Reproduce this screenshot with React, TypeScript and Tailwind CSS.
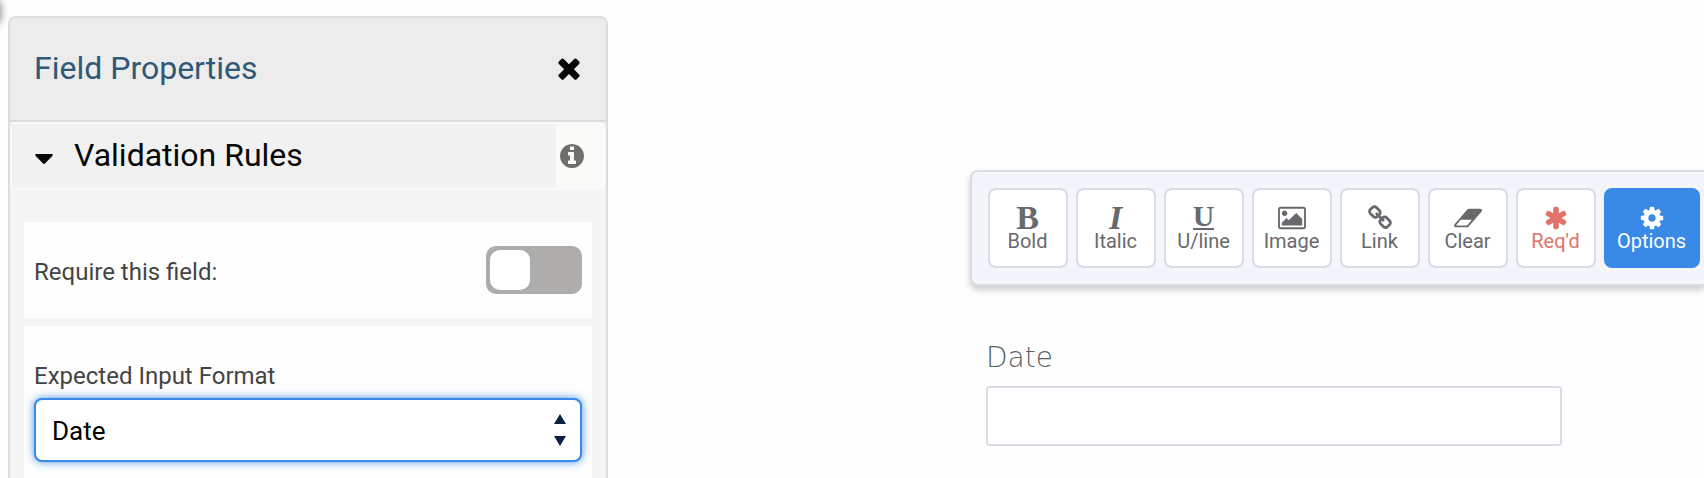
import type { ReactNode } from "react";

const paths = {
  times:
    "M1490 1322q0 40-28 68l-136 136q-28 28-68 28t-68-28l-294-294-294 294q-28 28-68 28t-68-28l-136-136q-28-28-28-68t28-68l294-294-294-294q-28-28-28-68t28-68l136-136q28-28 68-28t68 28l294 294 294-294q28-28 68-28t68 28l136 136q28 28 28 68t-28 68l-294 294 294 294q28 28 28 68z",
  info: "M1152 1376v-160q0-14-9-23t-23-9h-96v-512q0-14-9-23t-23-9h-320q-14 0-23 9t-9 23v160q0 14 9 23t23 9h96v320h-96q-14 0-23 9t-9 23v160q0 14 9 23t23 9h448q14 0 23-9t9-23zm-128-896v-160q0-14-9-23t-23-9h-192q-14 0-23 9t-9 23v160q0 14 9 23t23 9h192q14 0 23-9t9-23zm640 416q0 209-103 385.5t-279.5 279.5-385.5 103-385.5-103-279.5-279.5-103-385.5 103-385.5 279.5-279.5 385.5-103 385.5 103 279.5 279.5 103 385.5z",
  asterisk:
    "M1546 1050q46 26 59.5 77.5t-12.5 97.5l-64 110q-26 46-77.5 59.5t-97.5-12.5l-266-153v307q0 52-38 90t-90 38h-128q-52 0-90-38t-38-90v-307l-266 153q-46 26-97.5 12.5t-77.5-59.5l-64-110q-26-46-12.5-97.5t59.5-77.5l266-154-266-154q-46-26-59.5-77.5t12.5-97.5l64-110q26-46 77.5-59.5t97.5 12.5l266 153v-307q0-52 38-90t90-38h128q52 0 90 38t38 90v307l266-153q46-26 97.5-12.5t77.5 59.5l64 110q26 46 12.5 97.5t-59.5 77.5l-266 154z",
  eraser:
    "M960 1408l336-384h-768l-336 384h768zm1013-1077q15 34 9.5 71.5t-30.5 65.5l-896 1024q-38 44-96 44h-768q-38 0-69.5-20.5t-47.5-54.5q-15-34-9.5-71.5t30.5-65.5l896-1024q38-44 96-44h768q38 0 69.5 20.5t47.5 54.5z",
  image:
    "M640 576q0 80-56 136t-136 56-136-56-56-136 56-136 136-56 136 56 56 136zm1024 384v448h-1408v-192l320-320 160 160 512-512zm96-704h-1600q-13 0-22.5 9.5t-9.5 22.5v1216q0 13 9.5 22.5t22.5 9.5h1600q13 0 22.5-9.5t9.5-22.5v-1216q0-13-9.5-22.5t-22.5-9.5zm160 32v1216q0 66-47 113t-113 47h-1600q-66 0-113-47t-47-113v-1216q0-66 47-113t113-47h1600q66 0 113 47t47 113z",
  cog: "M1152 896q0-106-75-181t-181-75-181 75-75 181 75 181 181 75 181-75 75-181zm512-109v222q0 12-8 23t-20 13l-185 28q-19 54-39 91 35 50 107 138 10 12 10 25t-9 23q-27 37-99 108t-94 71q-12 0-26-9l-138-108q-44 23-91 38-16 136-29 186-7 28-36 28h-222q-14 0-24.5-8.5t-11.5-21.5l-28-184q-49-16-90-37l-141 107q-10 9-25 9-14 0-25-11-126-114-165-168-7-10-7-23 0-12 8-23 15-21 51-66.5t54-70.5q-27-50-41-99l-183-27q-13-2-21-12.5t-8-23.5v-222q0-12 8-23t19-13l186-28q14-46 39-92-40-57-107-138-10-12-10-24 0-10 9-23 26-36 98.5-107.5t94.5-71.5q13 0 26 10l138 107q44-23 91-38 16-136 29-186 7-28 36-28h222q14 0 24.5 8.5t11.5 21.5l28 184q49 16 90 37l142-107q9-9 24-9 13 0 25 10 129 119 165 170 7 8 7 22 0 12-8 23-15 21-51 66.5t-54 70.5q26 50 41 98l183 28q13 2 21 12.5t8 23.5z",
  link: "M1520 1216q0-40-28-68l-208-208q-28-28-68-28-42 0-72 32 3 3 19 18.5t21.5 21.5 15 19 13 25.5 3.5 27.5q0 40-28 68t-68 28q-15 0-27.5-3.5t-25.5-13-19-15-21.5-21.5-18.5-19q-33 31-33 73 0 40 28 68l206 207q27 27 68 27 40 0 68-26l147-146q28-28 28-67zm-703-705q0-40-28-68l-206-207q-28-28-68-28-39 0-68 27l-147 146q-28 28-28 67 0 40 28 68l208 208q27 27 68 27 42 0 72-31-3-3-19-18.5t-21.5-21.5-15-19-13-25.5-3.5-27.5q0-40 28-68t68-28q15 0 27.5 3.5t25.5 13 19 15 21.5 21.5 18.5 19q33-31 33-73zm895 705q0 120-85 203l-147 146q-83 83-203 83-121 0-204-85l-206-207q-83-83-83-203 0-123 88-209l-88-88q-86 88-208 88-120 0-204-84l-208-208q-84-84-84-204t85-203l147-146q83-83 203-83 121 0 204 85l206 207q83 83 83 203 0 123-88 209l88 88q86-88 208-88 120 0 204 84l208 208q84 84 84 204z",
};

function Icon({ name, width = 1792, className }: { name: keyof typeof paths; width?: number; className: string }) {
  return (
    <svg viewBox={`0 0 ${width} 1792`} className={className} fill="currentColor" aria-hidden="true">
      <path d={paths[name]} />
    </svg>
  );
}

function ToolButton({ label, tone = "plain", children }: { label: string; tone?: "plain" | "danger" | "active"; children: ReactNode }) {
  const tones = {
    plain: "w-20 border-[#d9dde6] bg-white text-[#68696d]",
    danger: "w-20 border-[#d9dde6] bg-white text-[#e2736b]",
    active: "w-24 border-[#3989e6] bg-[#3989e6] text-white",
  };
  return (
    <button type="button" className={`flex h-20 shrink-0 flex-col items-center rounded-lg border-2 pt-[15px] pr-px ${tones[tone]}`}>
      <span className="flex h-[26px] items-center justify-center font-['Liberation_Serif',serif] text-[34px] leading-[26px]">{children}</span>
      <span className="text-xl leading-5">{label}</span>
    </button>
  );
}

export default function App() {
  return (
    <div className="relative flex min-h-screen overflow-hidden bg-[#fefefe] pt-4 pl-2 font-[Roboto,sans-serif]">
      <div className="absolute top-0 -left-4 h-6 w-4 rounded-lg shadow-[0_0_8px_rgba(0,0,0,0.6)]" />

      <aside className="w-[600px] shrink-0 rounded-t-lg border-2 border-b-0 border-[#dcdcdc] bg-[#f4f4f4]">
        <header className="flex h-26 items-center justify-between rounded-t-md border-b-2 border-[#dcdcdc] bg-[#ececec] pr-[21px] pb-0.5 pl-6">
          <h2 className="text-[32px] leading-10 text-[#2f5977]">Field Properties</h2>
          <button type="button" aria-label="Close" className="text-[#070707]">
            <Icon name="times" className="size-8" />
          </button>
        </header>

        <div className="flex h-17 rounded-lg border-2 border-r-0 border-[#fafaf9] bg-[#fafaf8]">
          <button type="button" aria-expanded="true" className="flex flex-1 items-center gap-[21px] bg-[#f1f1f1] pb-0.5 pl-[23px] text-[#070707]">
            <svg viewBox="0 0 18 10" className="mt-2 h-[10px] w-[18px]" fill="currentColor" aria-hidden="true">
              <path d="M1 0h16q1.400 .4.500 1.700L10.200 9.300Q9 10.500 7.800 9.300L.5 1.700Q-.4.400 1 0z" />
            </svg>
            <span className="text-[32px] leading-10">Validation Rules</span>
          </button>
          <button type="button" aria-label="Help" className="flex w-[50px] items-center pl-0.5 text-[#706f6c]">
            <Icon name="info" className="size-7" />
          </button>
        </div>

        <div className="flex flex-col gap-2 px-3.5 pt-8">
          <div className="flex h-24 items-center justify-between bg-[#fefefe] px-2.5">
            <label htmlFor="required" className="pt-1 text-2xl text-[#444444]">
              Require this field:
            </label>
            <input
              id="required"
              type="checkbox"
              role="switch"
              className="h-12 w-24 appearance-none rounded-[10px] bg-[#aeadab] p-1 before:block before:size-10 before:rounded-[10px] before:bg-white checked:before:ml-12"
            />
          </div>
          <div className="bg-[#fefefe] px-2.5 pt-[34px] pb-4">
            <label htmlFor="format" className="block pb-1.5 text-2xl text-[#444444]">
              Expected Input Format
            </label>
            <div className="relative">
              <select
                id="format"
                className="block h-16 w-full appearance-none rounded-lg border-2 border-[#3989e6] bg-white px-4 pt-0.5 text-[26px] text-black shadow-[0_0_8px_rgba(57,137,230,0.9)] outline-none"
              >
                <option>Date</option>
              </select>
              <svg viewBox="0 0 12 32" className="pointer-events-none absolute top-4 right-4 h-8 w-3" fill="#0b1f40" aria-hidden="true">
                <path d="M6 0l6 10H0zM6 32l6-10H0z" />
              </svg>
            </div>
          </div>
        </div>
      </aside>

      <main className="min-w-0 flex-1 pt-[154px] pl-[362px]">
        <div
          role="toolbar"
          aria-label="Formatting"
          className="flex gap-2 rounded-l-lg border-2 border-r-0 border-[#d9dde6] bg-[#f4f5fa] py-4 pl-4 shadow-[0_4px_6px_rgba(0,0,0,0.2)]"
        >
          <ToolButton label="Bold">
            <b>B</b>
          </ToolButton>
          <ToolButton label="Italic">
            <b className="italic">I</b>
          </ToolButton>
          <ToolButton label="U/line">
            <span className="block h-6 border-b-2 border-current text-[30px] leading-5 font-bold">U</span>
          </ToolButton>
          <ToolButton label="Image">
            <Icon name="image" width={1920} className="h-[26px] w-7" />
          </ToolButton>
          <ToolButton label="Link">
            <Icon name="link" className="size-[26px]" />
          </ToolButton>
          <ToolButton label="Clear">
            <Icon name="eraser" width={2048} className="h-[26px] w-[30px]" />
          </ToolButton>
          <ToolButton label="Req'd" tone="danger">
            <Icon name="asterisk" className="size-[26px]" />
          </ToolButton>
          <ToolButton label="Options" tone="active">
            <Icon name="cog" className="size-[26px]" />
          </ToolButton>
        </div>

        <div className="pt-[52px] pr-[142px] pl-4">
          <label htmlFor="date" className="block pb-2 font-['DejaVu_Sans',sans-serif] text-[28px] leading-10 font-extralight text-[#56625f]">
            Date
          </label>
          <input id="date" type="text" className="block h-15 w-full rounded border-2 border-[#d9dde6] bg-white px-4 text-2xl outline-none" />
        </div>
      </main>
    </div>
  );
}
